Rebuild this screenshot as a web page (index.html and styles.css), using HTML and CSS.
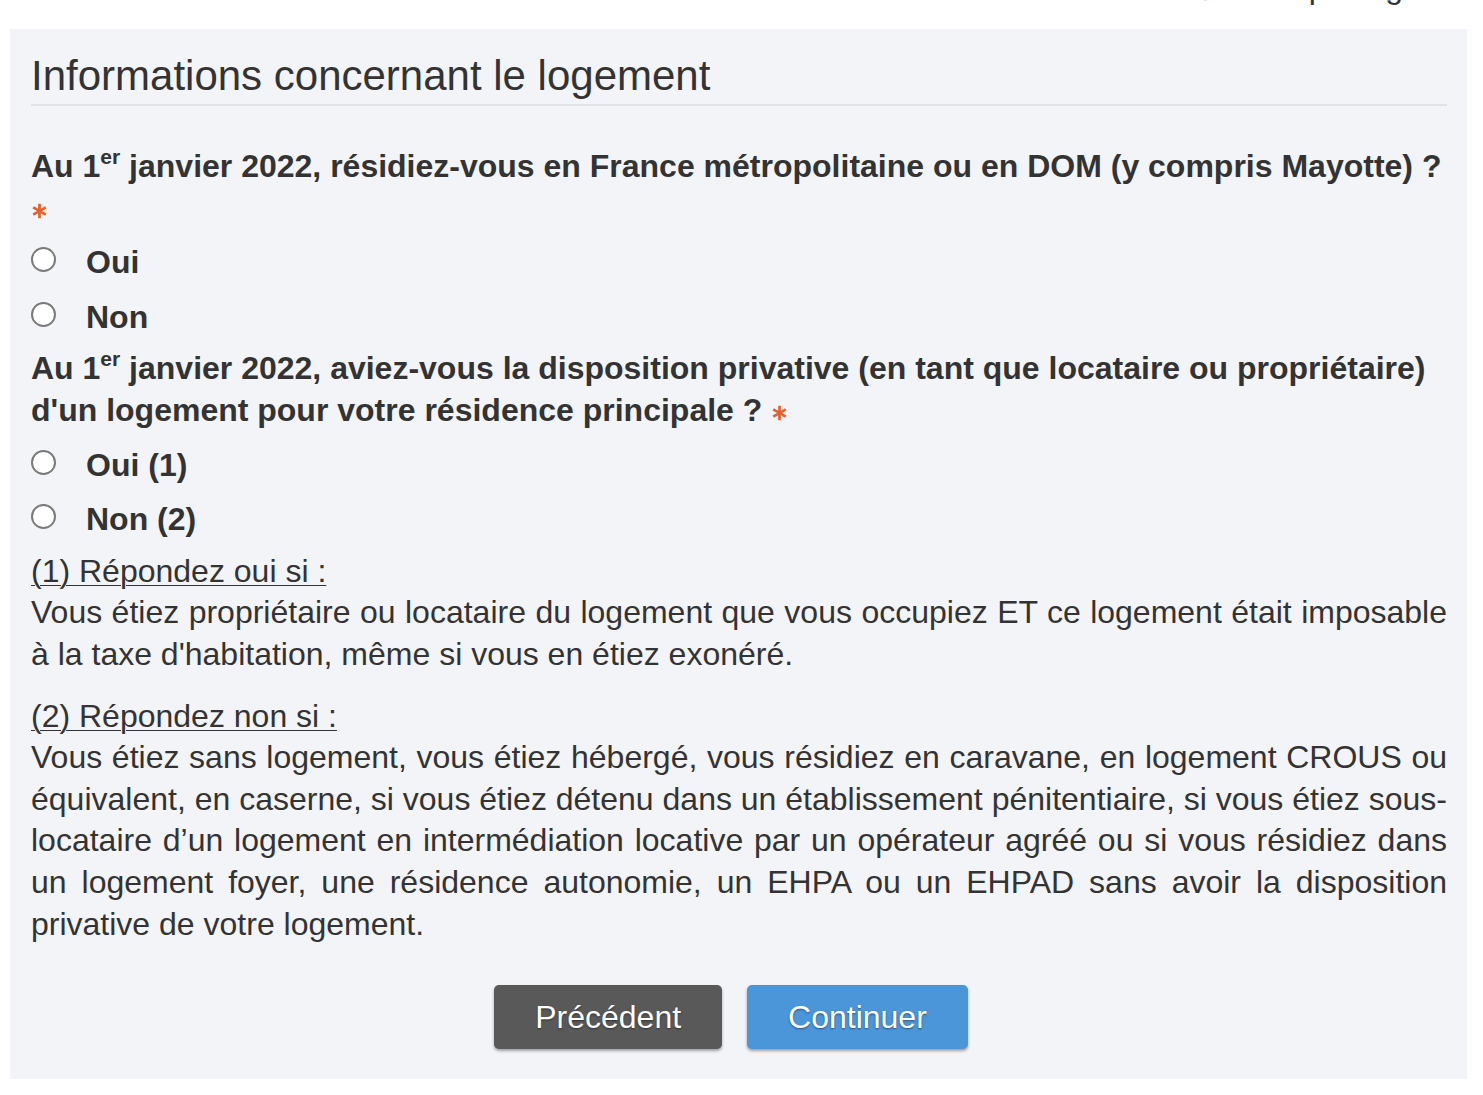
FILE: index.html
```html
<!DOCTYPE html>
<html lang="fr">
<head>
    <meta charset="UTF-8">
    <meta name="viewport" content="width=device-width, initial-scale=1.0">
    <title>Informations concernant le logement</title>
    <link rel="stylesheet" href="styles.css">
</head>
<body>

<div class="top-note">
    <span class="top-note-text"><svg class="star" viewBox="0 0 20 20" aria-hidden="true"><path d="M10 1.5v17M2.6 5.75l14.8 8.5M2.6 14.25l14.8-8.5"/></svg> Champ obligatoire</span>
</div>

<form class="panel">
    <h1 class="panel-title">Informations concernant le logement</h1>

    <fieldset class="question">
        <legend class="question-label">
            Au 1<sup>er</sup> janvier 2022, résidiez-vous en France métropolitaine ou en DOM (y compris Mayotte) ?
            <svg class="star" viewBox="0 0 20 20" aria-hidden="true"><path d="M10 1.5v17M2.6 5.75l14.8 8.5M2.6 14.25l14.8-8.5"/></svg>
        </legend>
        <label class="radio"><input type="radio" name="residence" value="oui"><span>Oui</span></label>
        <label class="radio"><input type="radio" name="residence" value="non"><span>Non</span></label>
    </fieldset>

    <fieldset class="question">
        <legend class="question-label">
            Au 1<sup>er</sup> janvier 2022, aviez-vous la disposition privative (en tant que locataire ou propriétaire) d'un logement pour votre résidence principale ?
            <svg class="star" viewBox="0 0 20 20" aria-hidden="true"><path d="M10 1.5v17M2.6 5.75l14.8 8.5M2.6 14.25l14.8-8.5"/></svg>
        </legend>
        <label class="radio"><input type="radio" name="logement" value="oui"><span>Oui (1)</span></label>
        <label class="radio"><input type="radio" name="logement" value="non"><span>Non (2)</span></label>
    </fieldset>

    <div class="help">
        <p><u>(1) Répondez oui si :</u><br>
        Vous étiez propriétaire ou locataire du logement que vous occupiez ET ce logement était imposable à la taxe d'habitation, même si vous en étiez exonéré.</p>
        <p><u>(2) Répondez non si :</u><br>
        Vous étiez sans logement, vous étiez hébergé, vous résidiez en caravane, en logement CROUS ou équivalent, en caserne, si vous étiez détenu dans un établissement pénitentiaire, si vous étiez sous-locataire d’un logement en intermédiation locative par un opérateur agréé ou si vous résidiez dans un logement foyer, une résidence autonomie, un EHPA ou un EHPAD sans avoir la disposition privative de votre logement.</p>
    </div>

    <div class="actions">
        <button type="button" class="btn btn-back">Précédent</button>
        <button type="button" class="btn btn-next">Continuer</button>
    </div>
</form>

</body>
</html>
```

FILE: styles.css
```css
body {
    margin: 0;
    background-color: #fff;
    font-family: "Liberation Sans", Arial, Helvetica, sans-serif;
    font-size: 32px;
    line-height: 41.6px;
    color: #333;
}

.top-note {
    height: 29px;
    overflow: hidden;
    text-align: right;
    white-space: nowrap;
}

.top-note-text {
    display: block;
    margin-top: -33px;
}

.top-note .star {
    vertical-align: -5px;
}

.panel {
    margin: 0 16px 0 10px;
    padding: 24px 20px 30px 21px;
    background-color: #f3f4f8;
}

.panel-title {
    margin: 0 0 40px;
    padding-bottom: 5px;
    border-bottom: 2px solid #e2e3e6;
    font-size: 42px;
    line-height: 46px;
    font-weight: normal;
    color: #333;
}

.question {
    margin: 0 0 10px;
    padding: 0;
    border: none;
    min-width: 0;
}

.question-label {
    padding: 0;
    font-weight: bold;
}

.question-label sup {
    font-size: 21px;
    line-height: 0;
    vertical-align: 13px;
}

.star {
    width: 17px;
    height: 20px;
    vertical-align: -2px;
}

.star path {
    stroke: #e5612f;
    stroke-width: 3.2;
    fill: none;
}

.radio {
    display: flex;
    align-items: center;
    margin-top: 13px;
    font-weight: bold;
    cursor: pointer;
}

.radio input {
    appearance: none;
    width: 25px;
    height: 25px;
    margin: 0 30px 0 0;
    border: 2px solid #7a7a7a;
    border-radius: 50%;
    background-color: #fff;
    position: relative;
    top: -3px;
}

.help p {
    margin: 0 0 20px;
    text-align: justify;
}

.help u {
    text-underline-offset: 3px;
    text-decoration-thickness: 1px;
}

.actions {
    display: flex;
    justify-content: center;
    gap: 25px;
    margin-top: 40px;
    padding-right: 16px;
}

.btn {
    height: 64px;
    padding: 0 41px;
    border: none;
    border-radius: 5px;
    font-family: inherit;
    font-size: 32px;
    color: #fff;
    text-shadow: 0 1px 2px rgba(0, 0, 0, 0.45);
    box-shadow: 0 2px 3px rgba(0, 0, 0, 0.35);
    cursor: pointer;
}

.btn-back {
    background-color: #595959;
}

.btn-next {
    background-color: #4a96d9;
}
```
